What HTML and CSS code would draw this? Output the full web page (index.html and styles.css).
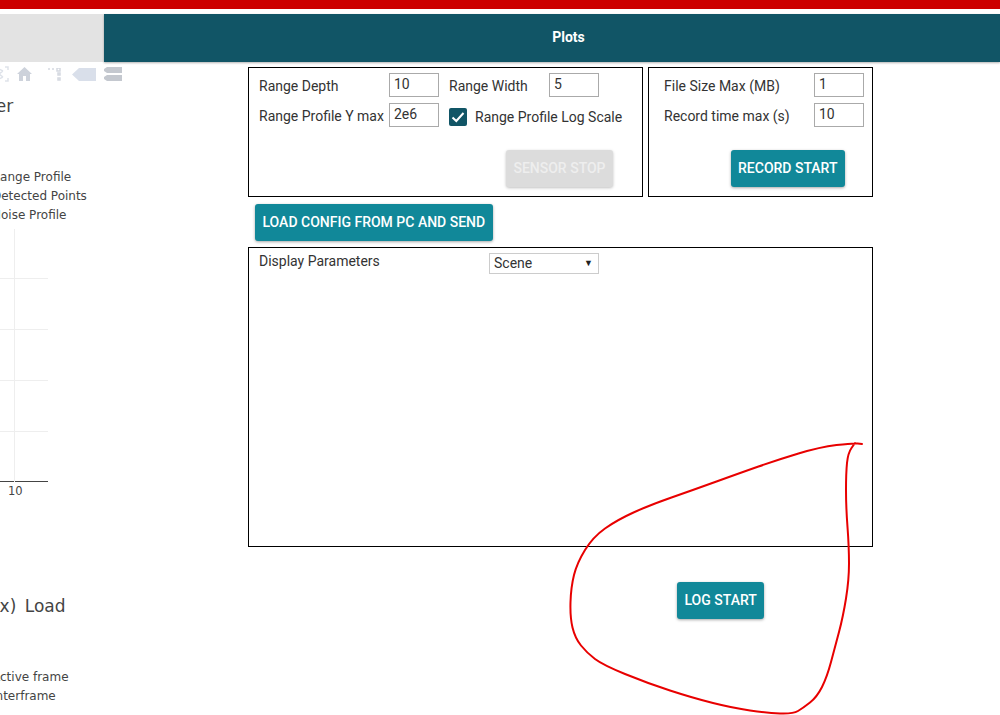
FILE: index.html
```html
<!DOCTYPE html>
<html lang="en">
<head>
<meta charset="utf-8">
<title>Plots</title>
<link rel="stylesheet" href="styles.css">
</head>
<body>
<div class="redbar"></div>
<nav class="tabs">
  <div class="tab-off"></div>
  <div class="tab-on">Plots</div>
</nav>
<main class="page">
  <section class="left">
    <div class="modebar">
      <svg class="mb-frame" width="10" height="16" viewBox="0 0 10 16"><path d="M0 3L4 5M0 8L4 5M0 8L4 11M0 13L4 11M6 1H9V4M6 15H9V12" fill="none" stroke="#dfe3ea" stroke-width="1.5"/></svg>
      <svg class="mb-home" width="15" height="14" viewBox="0 0 15 14"><path d="M7.500 0L15 7H13V14H9V9H6V14H2V7H0Z" fill="#cdd2db"/></svg>
      <svg class="mb-spike" width="13" height="14" viewBox="0 0 13 14"><path d="M0 1H2M4 1H6M9 0H12V3H9ZM10 5H12V7H10ZM10 10H12V12H10Z" fill="none" stroke="#d5d9e1" stroke-width="1.500"/></svg>
      <svg class="mb-tag" width="24" height="13" viewBox="0 0 24 13"><path d="M7 0H24V13H7L0 6.500Z" fill="#d9dfea"/></svg>
      <svg class="mb-compare" width="18" height="15" viewBox="0 0 18 15"><path d="M3 0H18V6H3L0 4V2ZM3 8H18V14H3L0 12V10Z" fill="#c4c8cf"/></svg>
    </div>
    <h2 class="plot-title first">Doppler</h2>
    <ul class="legend top">
      <li>Range Profile</li>
      <li>Detected Points</li>
      <li>Noise Profile</li>
    </ul>
    <div class="chart">
      <div class="grid-line"></div>
      <div class="grid-line"></div>
      <div class="grid-line"></div>
      <div class="grid-line"></div>
      <div class="grid-v"></div>
      <div class="axis"></div>
      <span class="tick">10</span>
    </div>
    <h2 class="plot-title second">(max) Load</h2>
    <ul class="legend bottom">
      <li>Active frame</li>
      <li>Interframe</li>
    </ul>
  </section>
  <section class="right">
    <div class="top-panels">
      <div class="panel sensor">
        <div class="fields">
          <label>Range Depth</label>
          <input class="num" value="10">
          <label>Range Width</label>
          <input class="num" value="5">
          <label>Range Profile Y max</label>
          <input class="num" value="2e6">
          <div class="check-row">
            <span class="check"><svg width="18" height="18" viewBox="0 0 18 18"><path d="M3.500 9.500L7.300 13L14.500 5" fill="none" stroke="#fff" stroke-width="2"/></svg></span>
            <span>Range Profile Log Scale</span>
          </div>
        </div>
        <div class="actions"><button class="btn disabled">SENSOR STOP</button></div>
      </div>
      <div class="panel record">
        <div class="fields">
          <label>File Size Max (MB)</label>
          <input class="num" value="1">
          <label>Record time max (s)</label>
          <input class="num" value="10">
        </div>
        <div class="actions"><button class="btn">RECORD START</button></div>
      </div>
    </div>
    <button class="btn load">LOAD CONFIG FROM PC AND SEND</button>
    <div class="panel display">
      <label class="display-label">Display Parameters</label>
      <div class="select">Scene<span class="arrow">▼</span></div>
    </div>
    <div class="log-row"><button class="btn">LOG START</button></div>
  </section>
</main>
<svg class="scribble" width="1000" height="715" viewBox="0 0 1000 715"><path d="M862 444L857.500 443.500Q853 443 836.500 445Q820 447 798.500 453.500Q777 460 758.500 466.500Q740 473 716.500 481.500Q693 490 671.500 497.500Q650 505 633.500 512.500Q617 520 605 528.500Q593 537 585 550Q577 563 574 575Q571 587 570.500 602Q570 617 572.500 627.500Q575 638 581 645.500Q587 653 595 659Q603 665 625 674Q647 683 670 690.500Q693 698 713 703Q733 708 750 710.500Q767 713 780 713.500Q793 714 798 711Q803 708 810 702.500Q817 697 822 687Q827 677 831 662Q835 647 839 632Q843 617 846 598.500Q849 580 849 563.500Q849 547 847.500 527Q846 507 846 490Q846 473 847 463Q848 453 851.500 448L855 443" fill="none" stroke="#e80000" stroke-width="2" stroke-linecap="round" stroke-linejoin="round"/></svg>
</body>
</html>
```
FILE: styles.css
```css
* { box-sizing: border-box; }
html, body { margin: 0; height: 715px; overflow: hidden; background: #fff; }
body { font-family: Roboto, "Liberation Sans", sans-serif; color: #333; position: relative; }

.redbar { height: 9px; background: #cc0000; }

.tabs { display: flex; height: 48px; margin-top: 5px; }
.tab-off { width: 104px; background: #e3e3e3; }
.tab-on {
  flex: 1;
  background: #115566;
  color: #fff;
  font-weight: 700;
  font-size: 14px;
  display: flex;
  align-items: center;
  justify-content: center;
  padding: 0 0 3px 33px;
  box-shadow: 0 1px 2px rgba(0,0,0,.3);
}

.page { display: flex; height: 653px; }

.left {
  width: 248px;
  flex: none;
  overflow: hidden;
  font-family: "DejaVu Sans", sans-serif;
  color: #444;
}
.modebar { position: relative; height: 28px; }
.modebar svg { position: absolute; }
.mb-frame { left: -1px; top: 4px; }
.mb-home { left: 17px; top: 5px; }
.mb-spike { left: 48px; top: 6px; }
.mb-tag { left: 72px; top: 6px; }
.mb-compare { left: 104px; top: 5px; }

.plot-title { margin: 0; font-weight: 400; font-size: 17px; line-height: 22px; white-space: nowrap; }
.plot-title.first { margin-left: -54px; margin-top: 5px; }
.plot-title.second { margin-left: -34px; margin-top: 87px; word-spacing: 3px; }

.legend { list-style: none; margin: 0; padding: 0; font-size: 12px; line-height: 19px; white-space: nowrap; }
.legend.top { margin-left: -8px; margin-top: 51px; }
.legend.bottom { margin-left: -8px; margin-top: 51px; }

.chart { position: relative; width: 48px; height: 276px; margin-top: 7px; padding-top: 46px; }
.grid-line { height: 51px; border-top: 1px solid #eeeeee; }
.grid-v { position: absolute; left: 14px; top: -3px; height: 253px; width: 1px; background: #eeeeee; }
.axis { height: 1px; background: #444; margin-top: -1px; }
.tick { position: absolute; left: 8px; top: 252px; font-size: 11.500px; line-height: 14px; }

.right { width: 625px; flex: none; padding-top: 5px; }
.top-panels { display: flex; gap: 5px; }
.panel { border: 1px solid #000; }
.sensor { width: 395px; height: 130px; padding: 5px 0 0 10px; }
.record { width: 225px; height: 130px; padding: 5px 0 0 15px; }

.fields { display: grid; align-items: center; row-gap: 6px; font-size: 14px; }
.sensor .fields { grid-template-columns: 130px 50px 110px 50px; }
.sensor .fields label:nth-of-type(2) { padding-left: 10px; }
.record .fields { grid-template-columns: 150px 50px; }
.fields label { white-space: nowrap; position: relative; top: 1px; }

.num {
  width: 50px;
  height: 24px;
  border: 1px solid #aaa;
  padding: 0 0 3px 4px;
  font: 14px Roboto, sans-serif;
  color: #333;
  background: #fff;
  border-radius: 0;
  outline: none;
}

.check-row { grid-column: 3 / 5; display: flex; align-items: center; gap: 8px; padding-left: 10px; white-space: nowrap; position: relative; top: 2px; }
.check { width: 18px; height: 18px; background: #115566; border-radius: 2px; display: block; flex: none; }
.check svg { display: block; }

.actions { display: flex; justify-content: flex-end; margin-top: 23px; }
.sensor .actions { padding-right: 29px; }
.record .actions { padding-right: 27px; }

.btn {
  height: 37px;
  border: 0;
  border-radius: 3px;
  background: #118899;
  color: #fff;
  font: 500 14px Roboto, sans-serif;
  padding: 0 7.5px 2px;
  white-space: nowrap;
  box-shadow: 0 1px 3px rgba(0,0,0,.35);
}
.btn.disabled { background: #dcdcdc; color: #eeeeee; width: 107px; padding: 0 0 2px; box-shadow: 0 1px 3px rgba(0,0,0,.25); }

.load { display: block; margin: 7px 0 6px 7px; }

.display { height: 300px; padding: 5px 0 0 10px; display: flex; align-items: flex-start; font-size: 14px; }
.display-label { width: 230px; line-height: 16px; }
.select {
  width: 110px;
  height: 21px;
  border: 1px solid #ccc;
  padding-left: 4px;
  line-height: 19px;
  font-size: 14px;
  position: relative;
}
.arrow { position: absolute; right: 5px; top: 0; font-size: 9px; color: #222; }

.log-row { display: flex; margin-top: 35px; padding-left: 429px; }

.scribble { position: absolute; left: 0; top: 0; pointer-events: none; }
```
